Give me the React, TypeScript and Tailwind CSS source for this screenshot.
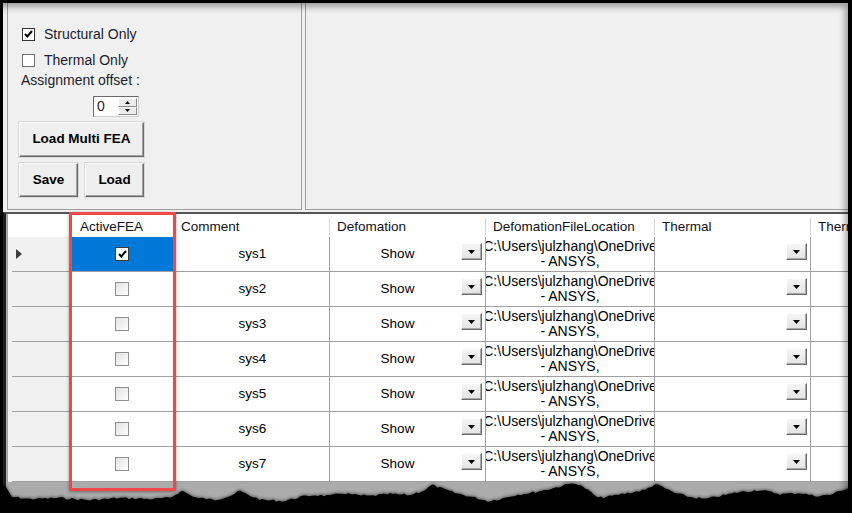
import React from 'react';

const rows = ['sys1', 'sys2', 'sys3', 'sys4', 'sys5', 'sys6', 'sys7'];

const cols = 'grid grid-cols-[63px_103px_156px_156px_169px_156px_1fr]';

// torn paper edge along the bottom, y values in page coordinates
const tornPoints: [number, number][] = [
  [0, 483], [6, 487], [12, 496], [30, 498], [60, 497], [90, 499], [120, 497], [150, 498],
  [170, 497], [178, 492], [183, 490], [190, 494], [198, 497], [215, 499], [232, 494],
  [240, 490], [248, 494], [262, 499], [285, 500], [300, 496], [315, 494], [330, 495],
  [342, 492], [355, 494], [370, 495], [390, 493], [410, 494], [425, 489], [432, 484],
  [440, 487], [455, 492], [472, 496], [488, 500], [500, 498], [515, 494], [530, 492],
  [550, 488], [565, 484], [575, 482], [585, 487], [598, 497], [612, 495], [628, 492],
  [645, 489], [655, 483], [662, 486], [675, 492], [690, 496], [705, 498], [720, 495],
  [740, 491], [760, 489], [780, 493], [800, 492], [815, 495], [830, 494], [842, 489],
  [852, 486],
];

const buildTornPath = () => {
  const top = 475;
  let seed = 7;
  const rand = () => {
    seed = (seed * 9301 + 49297) % 233280;
    return seed / 233280;
  };
  const pts: string[] = [];
  for (let i = 0; i < tornPoints.length - 1; i++) {
    const [x1, y1] = tornPoints[i];
    const [x2, y2] = tornPoints[i + 1];
    const steps = Math.max(2, Math.round((x2 - x1) / 3));
    for (let s = 0; s < steps; s++) {
      const t = s / steps;
      const x = x1 + (x2 - x1) * t;
      const y = y1 + (y2 - y1) * t + (rand() - 0.5) * 2.2;
      pts.push(`${x.toFixed(1)},${(y - top + 1).toFixed(1)}`);
    }
  }
  const [lx, ly] = tornPoints[tornPoints.length - 1];
  pts.push(`${lx},${ly - top + 1}`);
  return `M0,${513 - top} L${pts.join(' L')} L852,${513 - top} Z`;
};

const CheckMark = () => (
  <svg width="9" height="8" viewBox="0 0 9 8">
    <path d="M1 4l2.3 2.4L8 1" fill="none" stroke="#000" strokeWidth={2} />
  </svg>
);

const DropButton = () => (
  <div className="flex h-[17px] w-[21px] items-center justify-center border border-b-[#6b6b6b] border-l-white border-r-[#6b6b6b] border-t-white bg-gradient-to-b from-[#f6f6f6] to-[#e3e3e3] shadow-[inset_-1px_-1px_0_#a8a8a8]">
    <svg width="7" height="4" viewBox="0 0 7 4">
      <path d="M0 0h7L3.5 4z" fill="#000" />
    </svg>
  </div>
);

const WinButton: React.FC<{ label: string; className: string }> = ({ label, className }) => (
  <button
    className={`flex items-center justify-center border border-b-[#6b6b6b] border-l-white border-r-[#6b6b6b] border-t-white bg-[#efefef] text-[13.5px] font-bold text-black shadow-[inset_-1px_-1px_0_#a0a0a0,0_0_0_1px_#d8d8d8] ${className}`}
  >
    {label}
  </button>
);

const HeaderCell: React.FC<{ label?: string; pad?: string }> = ({ label, pad = 'pl-[7px]' }) => (
  <div className="flex items-center overflow-hidden bg-white">
    <span className={`flex-1 whitespace-nowrap pt-[4px] ${pad}`}>{label}</span>
    <div className="mt-[2px] h-[17px] w-px shrink-0 bg-[#d6d6d6]" />
  </div>
);

export default function App() {
  return (
    <div className="relative h-[513px] w-[852px] overflow-hidden bg-black pl-[3px] pr-[4px] pt-[3px] font-['Liberation_Sans',Arial,sans-serif] text-black">
      <div className="relative flex h-[510px] flex-col bg-[#f0f0f0]">
        {/* Top area: options panel + empty panel */}
        <div className="flex h-[207px] shrink-0">
          <div className="ml-[4px] flex w-[295px] flex-col border-b border-l border-r border-[#a0a0a0] pl-[11px] text-[14px] text-[#1c1c2c]">
            <div className="mt-[23px] flex h-[16px] items-center">
              <div className="ml-[3px] flex h-[13px] w-[13px] items-center justify-center border border-[#333] bg-white">
                <CheckMark />
              </div>
              <span className="ml-[9px]">Structural Only</span>
            </div>
            <div className="mt-[10px] flex h-[16px] items-center">
              <div className="ml-[3px] h-[13px] w-[13px] border border-[#707070] bg-white" />
              <span className="ml-[9px]">Thermal Only</span>
            </div>
            <div className="mt-[4px] ml-[2px] h-[16px] leading-[16px]">Assignment offset :</div>
            <div className="ml-[74px] mt-[8px] flex h-[21px] w-[46px] border border-b-[#d0d0d0] border-l-[#6a6a6a] border-r-[#d0d0d0] border-t-[#6a6a6a] bg-white">
              <span className="flex-1 pl-[3px] text-[14px] leading-[19px]">0</span>
              <div className="my-px mr-px flex w-[19px] flex-col">
                <div className="flex flex-1 items-center justify-center border border-b-[#8a8a8a] border-l-white border-r-[#8a8a8a] border-t-white bg-[#ececec]">
                  <svg width="5" height="3" viewBox="0 0 5 3">
                    <path d="M0 3h5L2.5 0z" fill="#000" />
                  </svg>
                </div>
                <div className="flex flex-1 items-center justify-center border border-b-[#8a8a8a] border-l-white border-r-[#8a8a8a] border-t-white bg-[#ececec]">
                  <svg width="5" height="3" viewBox="0 0 5 3">
                    <path d="M0 0h5L2.5 3z" fill="#000" />
                  </svg>
                </div>
              </div>
            </div>
            <WinButton label="Load Multi FEA" className="mt-[5px] h-[35px] w-[125px]" />
            <div className="mt-[6px] flex gap-[7px]">
              <WinButton label="Save" className="h-[34px] w-[59px]" />
              <WinButton label="Load" className="h-[34px] w-[59px]" />
            </div>
          </div>
          <div className="ml-[3px] flex-1 border-b border-l border-[#a0a0a0]" />
        </div>

        {/* Data grid */}
        <div className="mt-[2px] flex flex-1 flex-col border-l-[3px] border-t-2 border-l-[#1e1e1e] border-t-[#555] bg-[#ababab] pl-px">
          <div className="flex flex-1 flex-col border-l border-[#a0a0a0] bg-[#ababab]">
            <div className={`${cols} h-[23px] text-[13.5px] text-[#101018]`}>
              <HeaderCell />
              <HeaderCell label="ActiveFEA" pad="pl-[9px]" />
              <HeaderCell label="Comment" />
              <HeaderCell label="Defomation" />
              <HeaderCell label="DefomationFileLocation" />
              <HeaderCell label="Thermal" />
              <HeaderCell label="Therm" />
            </div>
            {rows.map((name, i) => (
              <div key={name} className={`${cols} h-[35px] text-[13.5px]`}>
                <div className="flex flex-col border-r border-[#a0a0a0] bg-[#f0f0f0]">
                  <div className="flex flex-1 items-center pl-[8px]">
                    {i === 0 && (
                      <svg width="6" height="10" viewBox="0 0 6 10">
                        <path d="M0 0l6 5-6 5z" fill="#3c3c3c" />
                      </svg>
                    )}
                  </div>
                  <div className="ml-[4px] h-px bg-[#a0a0a0]" />
                </div>
                <div
                  className={`flex items-center justify-center border-b border-r border-[#a0a0a0] ${
                    i === 0 ? 'bg-[#0078d7]' : 'bg-white'
                  }`}
                >
                  {i === 0 ? (
                    <div className="flex h-[14px] w-[14px] items-center justify-center border border-[#3a3a3a] bg-white">
                      <CheckMark />
                    </div>
                  ) : (
                    <div className="h-[14px] w-[14px] border border-[#8f8f8f] bg-gradient-to-br from-[#e2e2e2] to-white" />
                  )}
                </div>
                <div className="flex items-center justify-center border-b border-r border-[#a0a0a0] bg-white pl-[2px]">
                  {name}
                </div>
                <div className="flex items-start border-b border-r border-[#a0a0a0] bg-white">
                  <span className="flex flex-1 items-center justify-center self-stretch pl-[4px]">Show</span>
                  <div className="mr-[3px] mt-[6px]">
                    <DropButton />
                  </div>
                </div>
                <div className="flex flex-col overflow-hidden border-b border-r border-[#a0a0a0] bg-white pt-[2px] text-[14px] leading-[15px]">
                  <div className="flex justify-center whitespace-nowrap">C:\Users\julzhang\OneDrive</div>
                  <div className="flex justify-center whitespace-nowrap">- ANSYS,</div>
                </div>
                <div className="flex items-start justify-end border-b border-r border-[#a0a0a0] bg-white">
                  <div className="mr-[3px] mt-[6px]">
                    <DropButton />
                  </div>
                </div>
                <div className="border-b border-[#a0a0a0] bg-white" />
              </div>
            ))}
          </div>
        </div>

        {/* frame shadow along the top and right */}
        <div className="pointer-events-none absolute inset-0 shadow-[inset_-4px_5px_6px_-1px_rgba(0,0,0,0.35)]" />
      </div>

      {/* highlight around ActiveFEA column */}
      <div className="pointer-events-none absolute left-[69px] top-[212px] h-[279px] w-[107px] border-[3px] border-[#ef4848] shadow-[0_1px_3px_rgba(0,0,0,0.35)]" />

      {/* torn edge */}
      <svg className="pointer-events-none absolute bottom-0 left-0" width="852" height="38" viewBox="0 0 852 38">
        <defs>
          <filter id="soft" x="-5%" y="-50%" width="110%" height="200%">
            <feGaussianBlur stdDeviation="1.4" />
          </filter>
        </defs>
        <path d={buildTornPath()} fill="#000" opacity={0.45} filter="url(#soft)" transform="translate(0,-1)" />
        <path d={buildTornPath()} fill="#000" />
      </svg>
    </div>
  );
}
